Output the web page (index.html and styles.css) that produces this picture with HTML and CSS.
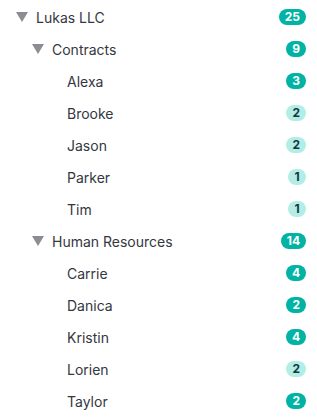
FILE: index.html
```html
<!DOCTYPE html>
<html>
<head>
<meta charset="utf-8">
<link rel="stylesheet" href="styles.css">
</head>
<body>
<ul class="tree">
  <li class="row l1"><span class="caret"></span><span class="label">Lukas LLC</span><span class="badge dark">25</span></li>
  <li class="row l2"><span class="caret"></span><span class="label">Contracts</span><span class="badge dark">9</span></li>
  <li class="row l3"><span class="label">Alexa</span><span class="badge dark">3</span></li>
  <li class="row l3"><span class="label">Brooke</span><span class="badge light">2</span></li>
  <li class="row l3"><span class="label">Jason</span><span class="badge light">2</span></li>
  <li class="row l3"><span class="label">Parker</span><span class="badge light">1</span></li>
  <li class="row l3"><span class="label">Tim</span><span class="badge light">1</span></li>
  <li class="row l2"><span class="caret"></span><span class="label">Human Resources</span><span class="badge dark">14</span></li>
  <li class="row l3"><span class="label">Carrie</span><span class="badge dark">4</span></li>
  <li class="row l3"><span class="label">Danica</span><span class="badge dark">2</span></li>
  <li class="row l3"><span class="label">Kristin</span><span class="badge dark">4</span></li>
  <li class="row l3"><span class="label">Lorien</span><span class="badge light">2</span></li>
  <li class="row l3"><span class="label">Taylor</span><span class="badge dark">2</span></li>
</ul>
</body>
</html>
```
FILE: styles.css
```css
html, body {
  margin: 0;
  padding: 0;
  background: #fff;
}
.tree {
  list-style: none;
  margin: 0;
  padding: 1px 11px 0 0;
  font-family: Inter, "Noto Sans", sans-serif;
  font-size: 14px;
  color: #343741;
}
.row {
  display: flex;
  align-items: center;
  height: 32px;
}
.l1 { padding-left: 16px; }
.l2 { padding-left: 32px; }
.l3 { padding-left: 67px; }
.caret {
  width: 0;
  height: 0;
  border-left: 6px solid transparent;
  border-right: 6px solid transparent;
  border-top: 10px solid #8a8d92;
  margin-right: 8px;
}
.label {
  flex: 1;
}
.badge {
  display: inline-flex;
  align-items: center;
  justify-content: center;
  height: 16px;
  min-width: 18px;
  box-sizing: border-box;
  padding: 0 6px;
  border-radius: 8px;
  font-size: 12px;
  font-weight: 700;
  line-height: 1;
}
.badge.dark {
  background: #00b3a4;
  color: #fff;
}
.badge.light {
  background: #b4ede7;
  color: #0e3b3a;
}
```
